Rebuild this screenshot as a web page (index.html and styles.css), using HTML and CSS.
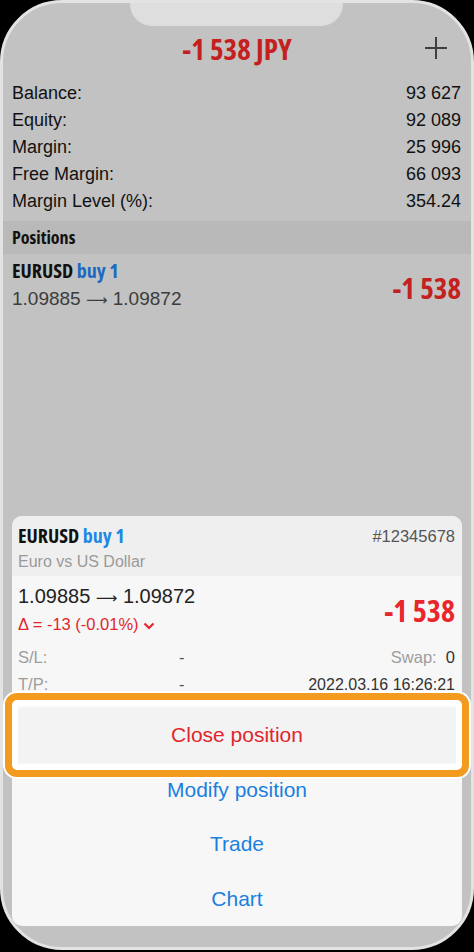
FILE: index.html
```html
<!DOCTYPE html>
<html>
<head>
    <meta charset="UTF-8">
    <title>Position</title>
    <link rel="stylesheet" href="styles.css">
</head>
<body>
<div class="phone">
    <div class="notch"></div>

    <!-- 顶部 总盈亏 -->
    <div class="top">
        <span></span>
        <span class="total">-1 538 JPY</span>
        <span class="plus">
            <svg width="22" height="22" viewBox="0 0 22 22"><path d="M11 0v22M0 11h22" stroke="#3f3f3f" stroke-width="2"/></svg>
        </span>
    </div>

    <div class="account">
        <div class="row"><span>Balance:</span><span>93 627</span></div>
        <div class="row"><span>Equity:</span><span>92 089</span></div>
        <div class="row"><span>Margin:</span><span>25 996</span></div>
        <div class="row"><span>Free Margin:</span><span>66 093</span></div>
        <div class="row"><span>Margin Level (%):</span><span>354.24</span></div>
    </div>

    <div class="band">Positions</div>

    <div class="pos">
        <div>
            <div class="sym">EURUSD <span class="buy">buy 1</span></div>
            <div class="price">1.09885 <span class="arr">&#10230;</span> 1.09872</div>
        </div>
        <div class="profit">-1 538</div>
    </div>

    <!-- 弹出的操作面板 -->
    <div class="sheet">
        <div class="sheet_head">
            <div class="line">
                <span class="sym big">EURUSD <span class="buy">buy 1</span></span>
                <span class="ticket">#12345678</span>
            </div>
            <div class="desc">Euro vs US Dollar</div>
        </div>
        <div class="sheet_body">
            <div class="line">
                <div>
                    <div class="price dark">1.09885 <span class="arr">&#10230;</span> 1.09872</div>
                    <div class="delta">&Delta; = -13 (-0.01%)
                        <svg width="12" height="8" viewBox="0 0 12 8"><path d="M1.5 1.5l4.5 4.5 4.5-4.5" fill="none" stroke="#e0262b" stroke-width="2.2"/></svg>
                    </div>
                </div>
                <div class="profit big_red">-1 538</div>
            </div>
            <div class="info first">
                <span class="grey">S/L:</span><span class="dash">-</span><span class="right"><span class="grey">Swap:</span>&nbsp; 0</span>
            </div>
            <div class="info">
                <span class="grey">T/P:</span><span class="dash">-</span><span class="right date">2022.03.16 16:26:21</span>
            </div>
        </div>
        <div class="act close">
            Close position
            <div class="hl"></div>
        </div>
        <div class="act">Modify position</div>
        <div class="act">Trade</div>
        <div class="act">Chart</div>
    </div>
</div>
</body>
</html>
```

FILE: styles.css
```css
body{
    margin: 0;
    background: #000;
    font-family: "Liberation Sans", Arial, sans-serif;
}
.phone{
    position: relative;
    width: 474px;
    height: 950px;
    box-sizing: border-box;
    border: 3px solid #e3e3e3;
    border-radius: 62px;
    background: #c2c2c2;
    overflow: hidden;
    display: flex;
    flex-direction: column;
}
.notch{
    position: absolute;
    left: 127px;
    top: -3px;
    width: 213px;
    height: 26px;
    background: #dedede;
    border-radius: 0 0 22px 22px;
}
.top{
    display: grid;
    grid-template-columns: 1fr auto 1fr;
    align-items: center;
    height: 52px;
    padding: 19px 24px 0 24px;
}
/* 窄体粗字 */
.total,.band,.sym,.profit{
    font-family: "Open Sans", Roboto, sans-serif;
    font-stretch: 75%;
    font-weight: bold;
}
.total{
    font-size: 29px;
    color: #c42020;
}
.plus{ justify-self: end; display: flex;}

.account{ padding: 6px 10px 6px 9px;}
.row{
    display: flex;
    justify-content: space-between;
    font-size: 18px;
    line-height: 27px;
    color: #111;
}
.band{
    background: #b9b9b9;
    height: 33px;
    line-height: 33px;
    padding-left: 9px;
    font-size: 18px;
    color: #111;
}
.pos{
    display: flex;
    justify-content: space-between;
    align-items: center;
    padding: 5px 10px 6px 9px;
}
.sym{
    font-size: 20px;
    line-height: 24px;
    color: #111;
}
.buy{ color: #1b69c0;}
.price{
    font-size: 19px;
    line-height: 32px;
    color: #3c3c3c;
}
.arr{ font-family: "DejaVu Sans", sans-serif; font-size: 15px;}
.profit{
    font-size: 29px;
    color: #c42020;
}

.sheet{
    margin: auto 9px 21px;
    background: #f7f7f7;
    border-radius: 10px;
}
.sheet_head{
    background: #efefef;
    border-radius: 10px 10px 0 0;
    height: 60px;
    padding: 8px 7px 0 6px;
    box-sizing: border-box;
}
.line{
    display: flex;
    justify-content: space-between;
    align-items: center;
}
.big{ font-size: 20px;}
.big .buy{ color: #1e88e5;}
.ticket{ font-size: 16.5px; color: #555;}
.desc{ font-size: 16px; color: #9a9a9a; line-height: 24px; margin-top: 2px;}

.sheet_body{ padding: 7px 7px 0 6px; height: 132px; box-sizing: border-box;}
.dark{ color: #222; line-height: 26px; font-size: 20px;}
.delta{
    font-size: 16.5px;
    line-height: 26px;
    color: #e0262b;
}
.big_red{ color: #e8262b; font-size: 30px;}
.info{
    display: grid;
    grid-template-columns: 161px 1fr auto;
    font-size: 16.5px;
    line-height: 27px;
    color: #333;
}
.info.first{ margin-top: 7px;}
.grey{ color: #9d9d9d;}
.dash{ color: #555;}
.right{ text-align: right;}
.date{ font-size: 16px;}

.act{
    height: 54.5px;
    line-height: 54px;
    text-align: center;
    font-size: 21px;
    color: #1b7fe0;
}
.close{
    position: relative;
    background: #f3f3f3;
    color: #e0262b;
}
.hl{
    position: absolute;
    left: -7px;
    right: -7px;
    top: -15px;
    bottom: -14px;
    border: 7px solid #f39b1f;
    border-radius: 12px;
    box-shadow: 0 0 0 2px #fff, inset 0 0 0 6px #fff;
}
```
